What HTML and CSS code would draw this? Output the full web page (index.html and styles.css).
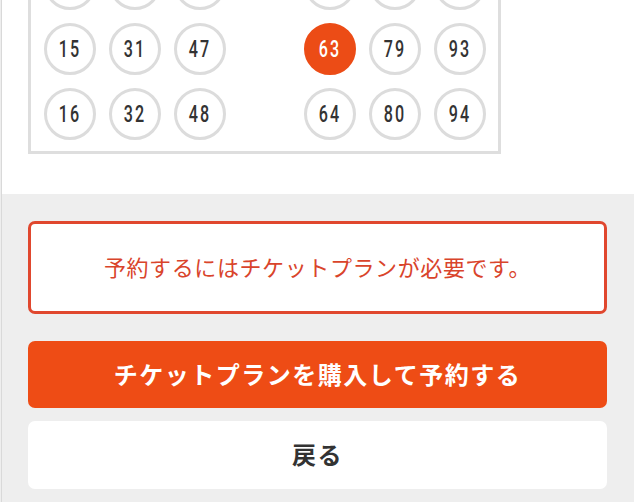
FILE: index.html
```html
<!DOCTYPE html>
<html lang="ja">
<head>
  <meta charset="UTF-8" />
  <meta name="viewport" content="width=device-width, initial-scale=1.0"/>
  <title>座席予約</title>
  <link rel="stylesheet" href="styles.css">
</head>
<body>
  <div class="page">
    <section class="seats">
      <div class="seat-map">
        <span class="seat"><i class="num">14</i></span><span class="seat"><i class="num">30</i></span><span class="seat"><i class="num">46</i></span><span class="aisle"></span><span class="seat"><i class="num">62</i></span><span class="seat"><i class="num">78</i></span><span class="seat"><i class="num">92</i></span>
        <span class="seat"><i class="num">15</i></span><span class="seat"><i class="num">31</i></span><span class="seat"><i class="num">47</i></span><span class="aisle"></span><span class="seat selected"><i class="num">63</i></span><span class="seat"><i class="num">79</i></span><span class="seat"><i class="num">93</i></span>
        <span class="seat"><i class="num">16</i></span><span class="seat"><i class="num">32</i></span><span class="seat"><i class="num">48</i></span><span class="aisle"></span><span class="seat"><i class="num">64</i></span><span class="seat"><i class="num">80</i></span><span class="seat"><i class="num">94</i></span>
      </div>
    </section>

    <section class="actions">
      <p class="notice">予約するにはチケットプランが必要です。</p>
      <button class="btn btn-primary">チケットプランを購入して予約する</button>
      <button class="btn btn-back">戻る</button>
    </section>
  </div>
</body>
</html>
```

FILE: styles.css
```css
* { box-sizing: border-box; margin: 0; padding: 0; }
body { font-family: "Noto Sans CJK JP", "Noto Sans", sans-serif; background: #eeeeee; color: #333; overflow: hidden; }
.page { margin-left: 1px; border-left: 1px solid #d9d9d9; min-height: 502px; }

.seats { background: #fff; padding: 0 0 40px 26px; }
.seat-map { width: 473px; margin-top: -58px; border: 3px solid #dedede; padding: 13px 13px 11px; display: grid; grid-template-columns: repeat(7, 52px); grid-auto-rows: 52px; gap: 13px; }
.seat { display: flex; align-items: center; justify-content: center; border: 3px solid #dcdcdc; border-radius: 50%; font-family: "Roboto", sans-serif; font-size: 23px; font-weight: 500; color: #333; }
.seat .num { display: inline-block; font-style: normal; letter-spacing: 3px; margin-left: -1px; margin-right: -2px; transform: scaleX(0.7); }
.seat.selected { background: #ec4c16; border-color: #ec4c16; color: #fff; }

.actions { padding: 27px 27px 13px 26px; display: flex; flex-direction: column; }
.notice { height: 93px; margin-bottom: 27px; padding-bottom: 4px; border: 3px solid #e0472e; border-radius: 7px; background: #fff; color: #d9442b; font-size: 22px; letter-spacing: 0.6px; display: flex; align-items: center; justify-content: center; }
.btn { border: none; border-radius: 7px; font-family: inherit; font-size: 24px; font-weight: bold; letter-spacing: 1.5px; padding-bottom: 3px; }
.btn-primary { height: 67px; margin-bottom: 13px; background: #ee4c15; color: #fff; }
.btn-back { height: 68px; background: #fff; color: #333; }
```
